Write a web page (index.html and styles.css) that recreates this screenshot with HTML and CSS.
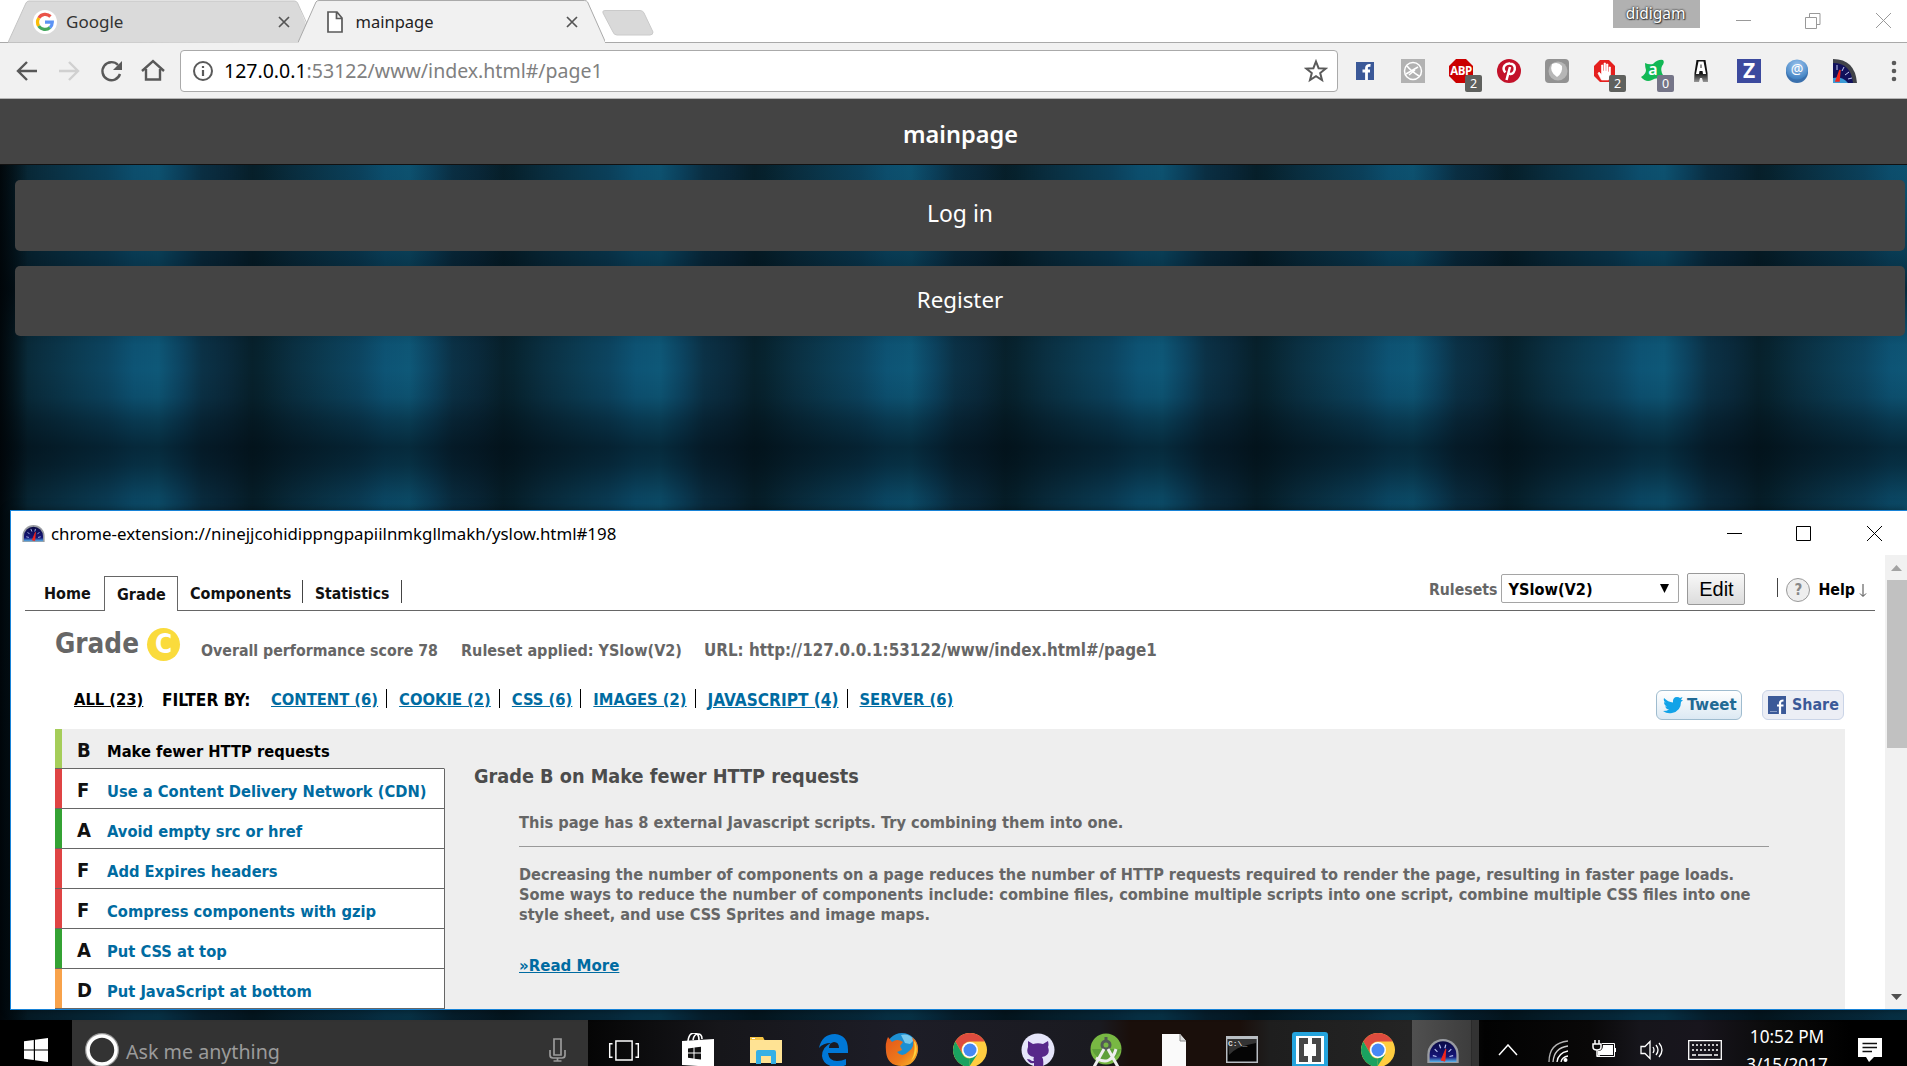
FILE: index.html
```
<!DOCTYPE html>
<html lang="en">
<head>
<meta charset="utf-8">
<title>mainpage</title>
<link rel="stylesheet" href="styles.css">
</head>
<body>
<svg class="defs" aria-hidden="true">
  <defs>
    <linearGradient id="dial" x1="0" y1="0" x2="0" y2="1"><stop offset="0" stop-color="#0a0a45"/><stop offset=".75" stop-color="#151578"/><stop offset="1" stop-color="#5cb8ee"/></linearGradient>
    <linearGradient id="fox" x1="0" y1="0" x2="1" y2="1"><stop offset="0" stop-color="#e4561b"/><stop offset=".6" stop-color="#ee7a1a"/><stop offset="1" stop-color="#fbc02d"/></linearGradient>
    <radialGradient id="orb" cx=".5" cy=".3" r=".7"><stop offset="0" stop-color="#9cc4ee"/><stop offset="1" stop-color="#3d7fc0"/></radialGradient>
    <linearGradient id="lettera" x1="0" y1="0" x2="0" y2="1"><stop offset=".6" stop-color="#111"/><stop offset="1" stop-color="#999"/></linearGradient>
    <symbol id="gauge" viewBox="0 0 34 26">
      <path d="M0 26V17A17 17 0 0 1 34 17V26Z" fill="#9a9da3"/>
      <path d="M2.500 25V17A14.500 14.500 0 0 1 31.500 17V25Z" fill="url(#dial)"/>
      <path d="M6 18l4 1M8 11l3 3M13 6l1.500 4M20 6l-1 4M26 11l-3 3M28 18l-4 1" stroke="#b9c4f2" stroke-width="1.300"/>
      <path d="M15 23L20 11L19 24Z" fill="#f3261c" stroke="#f3261c"/>
    </symbol>
    <symbol id="chrome" viewBox="0 0 34 34">
      <circle cx="17" cy="17" r="17" fill="#ffcd40"/>
      <path d="M2.300 8.500A17 17 0 0 1 31.700 8.500H17A8.500 8.500 0 0 0 9.600 21.200Z" fill="#dd4b3e"/>
      <path d="M2.300 8.500L9.600 21.200A8.500 8.500 0 0 0 17 25.500L16 34A17 17 0 0 1 2.300 8.500Z" fill="#1aa260"/>
      <path d="M17 25.500L24.400 21.200L16 34Z" fill="#1aa260"/>
      <circle cx="17" cy="17" r="8" fill="#fff"/><circle cx="17" cy="17" r="6.500" fill="#4688f4"/>
    </symbol>
  </defs>
</svg>

<header class="tabstrip">
  <div class="tab tab-idle">
    <svg class="tab-shape" viewBox="0 0 302 43"><path d="M0 42.500L18 3Q19 1 21 1H287Q289 1 290 3L302 33V43Z" fill="#dadada"/><path d="M0 42.500L18 3Q19 1 21 1H287Q289 1 290 3L300 25" fill="none" stroke="#c4c4c4"/></svg>
    <svg class="fav" viewBox="0 0 24 24"><circle cx="12" cy="12" r="12" fill="#fff"/><g fill="none" stroke-width="3.200"><path d="M17.500 6.500A7.500 7.500 0 0 0 5.800 8" stroke="#ea5349"/><path d="M5.800 8A7.500 7.500 0 0 0 5.700 16" stroke="#fbbc05"/><path d="M5.700 16A7.500 7.500 0 0 0 17 17.500" stroke="#44a95e"/><path d="M17 17.500A7.500 7.500 0 0 0 19.300 12.200H12" stroke="#5b93f5"/></g></svg>
    <span class="tab-title google">Google</span>
    <svg class="tab-x" viewBox="0 0 12 12"><path d="M1 1L11 11M11 1L1 11"/></svg>
  </div>
  <div class="tab tab-active">
    <svg class="tab-shape" viewBox="0 0 308 43"><path d="M0 42.500L18 2Q19 .5 21 .5H287Q289 .5 290 2L308 42.500V43H0Z" fill="#f1f1f1"/><path d="M0 42.500L18 2Q19 .5 21 .5H287Q289 .5 290 2L308 42.500" fill="none" stroke="#a9a9a9"/></svg>
    <svg class="page-ico" viewBox="0 0 16 22"><path d="M1 1H10L15 7V21H1ZM9.500 1V7.500H15" fill="#fff" stroke="#5a5a5a" stroke-width="1.700"/></svg>
    <span class="tab-title">mainpage</span>
    <svg class="tab-x" viewBox="0 0 12 12"><path d="M1 1L11 11M11 1L1 11"/></svg>
  </div>
  <svg class="newtab" viewBox="0 0 52 26"><path d="M3 .5H38Q41 .5 42 3L51 22Q51 25 48 25H15Q12 25 11 22L1 3Q0 .5 3 .5Z" fill="#d9d9d9" stroke="#cacaca"/></svg>
  <span class="profile">didigam</span>
  <svg class="wc wc-main" viewBox="0 0 171 30"><path d="M0 20.500H15M69.500 17.500h11v11h-11zM73.500 17v-3.500h10.500v11h-3.500M140 13L155 28M155 13L140 28" fill="none" stroke="#999"/></svg>
</header>

<nav class="toolbar">
  <svg class="navs" viewBox="0 0 170 30">
    <g fill="none" stroke="#585858" stroke-width="2.400"><path d="M27 15H9M17 6L8 15L17 24"/><path d="M49 15H67M59 6L68 15L59 24" stroke="#d0d0d0"/><path d="M108 9A9 9 0 1 0 110 18"/><path d="M132 15L143 5L154 15M136 13V23.500H150V13"/></g>
    <path d="M112 5V14H103Z" fill="#585858"/>
  </svg>
  <div class="omnibox">
    <svg class="info" viewBox="0 0 22 22"><circle cx="11" cy="11" r="9" fill="none" stroke="#5a5a5a" stroke-width="2"/><path d="M11 6V8M11 10V16" stroke="#5a5a5a" stroke-width="2.200"/></svg>
    <span class="url"><b>127.0.0.1</b>:53122/www/index.html#/page1</span>
    <svg class="star" viewBox="0 0 24 24"><path d="M12 2.500L14.600 9.200L21.700 9.600L16.200 14.100L18 21L12 17.100L6 21L7.800 14.100L2.300 9.600L9.400 9.200Z" fill="none" stroke="#5a5a5a" stroke-width="2"/></svg>
  </div>
  <div class="ext"><svg viewBox="0 0 24 24"><rect x="3" y="3" width="18" height="18" fill="#3b5998"/><path d="M13.500 21V9Q13.500 6 17.500 6.500M9.500 12H17" fill="none" stroke="#fff" stroke-width="2.800"/></svg></div>
  <div class="ext"><svg viewBox="0 0 24 24"><path d="M0 0H24V24H0Z" fill="#b2b2b2"/><g fill="none" stroke="#fff" stroke-width="1.500"><circle cx="12" cy="12" r="8.500"/><path d="M6 7Q10 12 18 17M5 15L17 8M8 16L14 11"/></g></svg></div>
  <div class="ext"><svg viewBox="0 0 24 24"><path d="M7 0H17L24 7V17L17 24H7L0 17V7Z" fill="#cb0000"/></svg><span class="abp">ABP</span><i class="badge">2</i></div>
  <div class="ext"><svg viewBox="0 0 24 24"><circle cx="12" cy="12" r="12" fill="#c3122a"/><path d="M9.500 21L13 8M8.300 13.500C4 8 9 4 13 4.500C19 5 18.500 11 16.500 13.500C14.500 16 12 15 11.300 13.500" fill="none" stroke="#fff" stroke-width="2.500"/></svg></div>
  <div class="ext"><svg viewBox="0 0 24 24"><rect width="24" height="24" rx="4" fill="#929292"/><circle cx="13" cy="12" r="9.500" fill="#b6b6b6"/><path d="M7 5Q13 2 17 7Q18 14 12 18Q4 13 7 5Z" fill="#fff"/></svg></div>
  <div class="ext"><svg viewBox="0 0 24 24"><path d="M7 1H16L22 7V17L16 23H7L1 17V7Z" fill="#e5201e"/><path d="M8.500 21L5 14.500L6 13L8.500 15.500V6H10V12H11V4H12.500V12H13.500V5H15V13H16V8H17.500V16L15.500 21Z" fill="#fff" stroke="#fff" stroke-width=".6"/></svg><i class="badge">2</i></div>
  <div class="ext"><svg viewBox="0 0 24 24"><path d="M4 4Q8 6 12 5Q17 0 22 1Q24 3 21 7Q19 11 22 16L21 20Q15 18 11 21Q5 24 0 18Q5 15 5 11Q4 8 4 4Z" fill="#12b855"/></svg><span class="avast">a</span><i class="badge bluish">0</i></div>
  <div class="ext"><svg viewBox="0 0 24 24"><path d="M7.500 1H16.500L18.500 14L19 23H14L13 19H11L10 23H5L5.500 14Z" fill="url(#lettera)"/><path d="M9.500 2.500H14.500L17 15H14L13.500 12H10.500L10 15H7Z" fill="#fff"/><path d="M11.500 5.500H12.500V9H11.500Z" fill="#222"/></svg></div>
  <div class="ext"><svg viewBox="0 0 24 24"><path d="M0 0H24V24H0Z" fill="#3c4a9e"/></svg><span class="zed">Z</span></div>
  <div class="ext"><svg viewBox="0 0 24 24"><circle cx="12" cy="13" r="11" fill="#3a70ad"/><ellipse cx="12" cy="10.500" rx="11" ry="10" fill="url(#orb)"/></svg><span class="at">@</span></div>
  <div class="ext"><svg viewBox="0 0 24 24"><path d="M0 0Q22 0 24 24H0Z" fill="#414348"/><path d="M0 4Q18 4 20 24H0Z" fill="#11115c"/><path d="M0 19Q9 17 15 24H0Z" fill="#3b9ad6"/><path d="M4 6v5M11 8l-2 4M16 13l-4 3M19 19l-4 1" stroke="#c4c9ef"/><path d="M3 22L7 11L6 22Z" fill="#f3261c" stroke="#f3261c" stroke-width="1.500"/></svg></div>
  <svg class="dots" viewBox="0 0 6 24"><g fill="#5a5a5a"><circle cx="3" cy="4" r="2.300"/><circle cx="3" cy="12" r="2.300"/><circle cx="3" cy="20" r="2.300"/></g></svg>
</nav>

<main class="app">
  <h1 class="app-head">mainpage</h1>
  <div class="app-body">
    <a class="btn login">Log in</a>
    <a class="btn">Register</a>
  </div>
</main>

<section class="window">
  <div class="titlebar">
    <svg class="title-ico"><use href="#gauge"/></svg>
    <span class="title-text">chrome-extension://ninejjcohidippngpapiilnmkgllmakh/yslow.html#198</span>
    <svg class="wc" viewBox="0 0 180 16"><path d="M0 7.500H15M69.500 .5h14v14h-14zM140 0L155 15M155 0L140 15" fill="none" stroke="#000"/></svg>
  </div>
  <div class="viewport">
    <div class="page">
      <div class="menu">
        <span class="mtab home">Home</span><span class="mtab on">Grade</span><span class="mtab comp">Components</span><span class="mtab stat">Statistics</span>
        <div class="rules">
          <label>Rulesets</label>
          <span class="select">YSlow(V2)<svg viewBox="0 0 9 9"><path d="M0 0H9L4.500 9Z"/></svg></span>
          <span class="edit">Edit</span>
          <span class="bar"></span>
          <span class="q">?</span>
          <span class="help">Help</span>
          <svg class="down" viewBox="0 0 8 14"><path d="M4 0V12M1 9.500L4 12.500L7 9.500" fill="none" stroke="#444"/></svg>
        </div>
      </div>
      <div class="summary">
        <span class="grade">Grade</span><span class="gbadge">C</span>
        <span class="s1">Overall performance score 78</span><span class="s2">Ruleset applied: YSlow(V2)</span><span class="s3">URL: http://127.0.0.1:53122/www/index.html#/page1</span>
      </div>
      <div class="filters">
        <a class="all">ALL (23)</a><span class="by">FILTER BY:</span>
        <span class="f"><a>CONTENT (6)</a></span><span class="f"><a>COOKIE (2)</a></span><span class="f"><a>CSS (6)</a></span><span class="f"><a>IMAGES (2)</a></span><span class="f js"><a>JAVASCRIPT (4)</a></span><span class="f"><a>SERVER (6)</a></span>
        <div class="social">
          <span class="tweet"><svg viewBox="0 0 20 17"><path d="M1 1Q5 5 10 5.500Q9.500 0 14 0Q16 0 17 1L19.500 0L18 3L20 3L18 5Q18 14 9 16Q4 17 0 14Q4 14 6 12.500Q3 12 2 9.500H4Q1 8 1 5L3 6Q0 4 1 1Z" fill="#12a3e8"/></svg>Tweet</span>
          <span class="share"><svg viewBox="0 0 18 18"><path d="M0 0H18V18H0Z" fill="#3b5998"/><path d="M2 15.500H9" stroke="#8c9fc8"/><path d="M12 18V7Q12 4.500 15.500 4.500M9 9.500H15.500" fill="none" stroke="#fff" stroke-width="2.200"/></svg>Share</span>
        </div>
      </div>
      <div class="report">
        <ul class="list">
          <li class="sel gb"><b>B</b>Make fewer HTTP requests</li>
          <li class="gf"><b>F</b>Use a Content Delivery Network (CDN)</li>
          <li class="ga"><b>A</b>Avoid empty src or href</li>
          <li class="gf"><b>F</b>Add Expires headers</li>
          <li class="gf"><b>F</b>Compress components with gzip</li>
          <li class="ga"><b>A</b>Put CSS at top</li>
          <li class="gd"><b>D</b>Put JavaScript at bottom</li>
        </ul>
        <article class="detail">
          <h2>Grade B on Make fewer HTTP requests</h2>
          <p class="count">This page has 8 external Javascript scripts. Try combining them into one.</p>
          <p class="desc">Decreasing the number of components on a page reduces the number of HTTP requests required to render the page, resulting in faster page loads.<br><span class="mid">Some ways to reduce the number of components include: combine files, combine multiple scripts into one script, combine multiple CSS files into one</span><br>style sheet, and use CSS Sprites and image maps.</p>
          <a class="more">»Read More</a>
        </article>
      </div>
    </div>
    <div class="scroll"><svg viewBox="0 0 11 6"><path d="M0 6L5.500 0L11 6Z" fill="#a3a3a3"/></svg><i></i><svg class="dn" viewBox="0 0 11 6"><path d="M0 0L5.500 6L11 0Z" fill="#505050"/></svg></div>
  </div>
</section>

<footer class="taskbar">
  <div class="start"><svg viewBox="0 0 24 24"><path d="M0 3.300L9.800 2V11.500H0ZM11 1.800L24 0V11.500H11ZM0 12.500H9.800V22L0 20.700ZM11 12.500H24V24L11 22.200Z" fill="#fff"/></svg></div>
  <div class="search">
    <svg class="cortana" viewBox="0 0 34 34"><circle cx="17" cy="17" r="15" fill="none" stroke="#999" stroke-width="4"/><circle cx="17" cy="17" r="14" fill="none" stroke="#fff" stroke-width="3.500"/></svg>
    <span>Ask me anything</span>
    <svg class="mic" viewBox="0 0 17 24"><path d="M5 1H12V17H5ZM1 12V17Q1 20 4 20H13Q16 20 16 17V12M8.500 20V23M4.500 23H12.500" fill="none" stroke="#9b9b9b" stroke-width="1.700"/></svg>
  </div>
  <div class="taskview"><svg viewBox="0 0 32 22"><path d="M7.500 1H24.500V21H7.500ZM4 4H1V18H4M28 4H31V18H28" fill="none" stroke="#fff" stroke-width="1.500"/></svg></div>
  <div class="tk"><svg viewBox="0 0 34 34"><path d="M1 8L33 6V34L1 32Z" fill="#fff"/><path d="M7 8Q8 0 13 0Q18 0 18 7M12 7Q13 1 17 1Q21 1 21 6" fill="none" stroke="#fff" stroke-width="1.600"/><path d="M7 15.500L12.500 14.800V19.500H7ZM13.500 14.600L20 13.800V19.500H13.500ZM7 20.500H12.500V25.500L7 24.800ZM13.500 20.500H20V26.500L13.500 25.700Z" fill="#111"/></svg></div>
  <div class="tk"><svg viewBox="0 0 34 34"><path d="M1 4H14L16 8H1Z" fill="#f5c445"/><path d="M1 7H33V30H1Z" fill="#ffe394"/><path d="M3 5.500H6" stroke="#fff"/><path d="M7 31V19Q7 17 9 17H25Q27 17 27 19V31H22V23H12V31Z" fill="#35b0e6"/></svg></div>
  <div class="tk"><svg viewBox="0 0 34 34"><path d="M2 15Q5 1 18 1Q31 2 31 17V20H11Q12 28 20 28Q25 28 29 26V32Q25 34 19 34Q6 33 5 23Q5 14 14 10Q6 10 2 15ZM12 15H22Q22 9 17 9Q12 10 12 15Z" fill="#0078d7" fill-rule="evenodd"/></svg></div>
  <div class="tk"><svg viewBox="0 0 34 34"><circle cx="17" cy="16" r="16" fill="#1c8fd2"/><path d="M16 2Q24 0 29 7L25 11L20 10Z" fill="#78c8ec"/><path d="M3 4L7 9Q12 5 18 9L15 13L17 17L12 19Q17 25 23 19Q31 14 27 4Q34 9 33 18Q30 33 17 33Q2 33 1 18Q0 10 3 4Z" fill="url(#fox)"/><path d="M30 8Q35 20 26 28Q31 19 29 9Z" fill="#ffd23c"/></svg></div>
  <div class="tk"><svg viewBox="0 0 34 34"><use href="#chrome"/></svg></div>
  <div class="tk"><svg viewBox="0 0 34 34"><circle cx="17" cy="17" r="16.500" fill="#e5e5fa"/><path d="M7 8L12 11Q17 9.500 22 11L27 8Q28 12 27 14Q30 22 21 24Q23 26 22 34H13V30Q8 31 6 26Q9 26 11 28H13Q12 26 13 24Q4 22 7 14Z" fill="#57288a"/></svg></div>
  <div class="tk"><svg viewBox="0 0 34 34"><circle cx="17" cy="16" r="15.500" fill="#78b843"/><path d="M3 16H32A15 15 0 0 1 3 16" fill="#5fa03a"/><circle cx="17" cy="12" r="4" fill="none" stroke="#525c55" stroke-width="3"/><path d="M17 4V8" stroke="#525c55" stroke-width="3"/><path d="M15 16L5 34M19 16L29 34M7 25Q22 34 27 16" fill="none" stroke="#eee" stroke-width="3"/></svg></div>
  <div class="tk"><svg viewBox="0 0 34 34"><path d="M5 1H23L29 8V34H5Z" fill="#fafafa"/><path d="M23 1V8H29" fill="#ddd" stroke="#888"/></svg></div>
  <div class="tk"><svg viewBox="0 0 34 34"><path d="M1 3H33V30H1Z" fill="#b9bec3"/><path d="M2.500 6H31.500V28.500H2.500Z" fill="#050505"/><path d="M3 6H31V10Q12 13 4 22Z" fill="#333"/></svg><span class="prompt">C:\_</span></div>
  <div class="tk"><svg viewBox="0 0 36 36"><rect width="36" height="36" rx="3" fill="#25a4dd"/><path d="M4 4H32V32H4Z" fill="#fff"/><path d="M16 6H7V30H16V24H12V12H16ZM20 6H29V30H20V24H24V12H20Z" fill="#474747"/></svg></div>
  <div class="tk"><svg viewBox="0 0 34 34"><use href="#chrome"/></svg></div>
  <div class="tk running"><svg class="g"><use href="#gauge"/></svg></div>
  <div class="tray chev"><svg viewBox="0 0 20 12"><path d="M1 11L10 1L19 11" fill="none" stroke="#fff" stroke-width="1.500"/></svg></div>
  <div class="tray wifi"><svg viewBox="0 0 20 22"><g fill="none" stroke="#fff" stroke-width="1.300"><path d="M1 22Q1 3 20 1" opacity=".7"/><path d="M5 22Q6 8 20 6" opacity=".8"/><path d="M9 22Q10 13 20 11"/><path d="M13 22Q14 17 20 16"/></g><circle cx="17.500" cy="20" r="2" fill="#fff"/></svg></div>
  <div class="tray batt"><svg viewBox="0 0 24 18"><path d="M3 0V4M7 0V4M1 4H9V7Q9 10 5 10Q1 10 1 7ZM5 10V16H8" fill="none" stroke="#fff" stroke-width="1.500"/><path d="M11 5H21V15H6V11Q11 11 11 5Z" fill="#fff"/><path d="M10 3.500H22.500V16.500H5M23.500 8V12" fill="none" stroke="#fff"/></svg></div>
  <div class="tray spk"><svg viewBox="0 0 24 20"><path d="M1 6.500H5L10 1.500V18.500L5 13.500H1ZM13 7Q15 10 13 13M16 5Q20 10 16 15M19 3Q25 10 19 17" fill="none" stroke="#fff" stroke-width="1.300"/></svg></div>
  <div class="tray kbd"><svg viewBox="0 0 34 20"><path d="M.7 .7H33.300V19.300H.7Z" fill="none" stroke="#fff" stroke-width="1.300"/><path d="M4 5H30M4 10H30" stroke="#fff" stroke-width="1.500" stroke-dasharray="2 2"/><path d="M4 15H8M10 15H24M26 15H30" stroke="#fff" stroke-width="1.500"/></svg></div>
  <div class="clock"><span>10:52 PM</span><span class="date">3/15/2017</span></div>
  <div class="tray act"><svg viewBox="0 0 24 24"><path d="M0 0H24V19H16L11 24L8 19H0Z" fill="#fff"/><path d="M4.500 5.500H19M4.500 9.500H19M4.500 13.500H14" stroke="#111" stroke-width="1.300"/></svg></div>
</footer>
</body>
</html>
```
FILE: styles.css
```
* { box-sizing: border-box; }
body { margin: 0; width: 1907px; height: 1066px; overflow: hidden; position: relative; background: #fff; font-family: "Noto Sans", sans-serif; display: flex; flex-direction: column; }
svg { display: block; flex: none; }
.defs { position: absolute; width: 0; height: 0; }
span, a, label, li { white-space: nowrap; }

/* tab strip */
.tabstrip { height: 43px; flex: none; display: flex; align-items: flex-start; padding-left: 8px; border-bottom: 1px solid #a9a9a9; }
.tab { position: relative; width: 302px; height: 43px; display: flex; align-items: center; padding: 0 20px 0 25px; color: #333; font-size: 17px; }
.tab-active { width: 308px; margin-left: -12px; padding: 0 27px 0 29px; color: #222; font-size: 16.500px; }
.tab-shape { position: absolute; inset: 0; width: 100%; height: 43px; }
.tab > :not(.tab-shape) { position: relative; }
.fav { width: 24px; height: 24px; margin-right: 9px; }
.page-ico { width: 16px; height: 22px; margin-right: 13px; }
.tab-title { flex: 1; }
.tab-x { width: 12px; height: 12px; stroke: #555; stroke-width: 1.700; }
.newtab { width: 52px; height: 26px; margin: 10px 0 0 -3px; }
.profile { width: 87px; height: 28px; margin-left: 959px; background: #b1b1b1; color: #fff; font-size: 15.500px; line-height: 26px; text-align: center; padding-right: 2px; text-shadow: 0 0 2px #333, 0 0 2px #333, 1px 1px 1px #444; }
.wc-main { width: 171px; height: 30px; margin-left: 36px; }

/* toolbar */
.toolbar { height: 56px; flex: none; background: #f1f1f1; display: flex; align-items: center; border-bottom: 1px solid #b4b4b4; padding-left: 10px; }
.navs { width: 170px; height: 30px; }
.omnibox { width: 1158px; height: 42px; margin-right: 3px; border: 1px solid #aaa; border-radius: 4px; background: #fff; display: flex; align-items: center; padding: 0 9px 0 11px; }
.info { width: 22px; height: 22px; margin-right: 10px; }
.url { flex: 1; color: #808080; font-size: 19.500px; }
.url b { font-weight: 400; color: #000; }
.star { width: 24px; height: 24px; }
.ext { width: 48px; height: 24px; position: relative; display: flex; justify-content: center; }
.ext svg { width: 24px; height: 24px; }
.badge { position: absolute; left: 28px; top: 16px; width: 17px; height: 17px; background: #5f615e; border-radius: 2px; color: #fff; font: normal 12.500px/17px "Noto Sans", sans-serif; text-align: center; }
.bluish { background: #757588; }
.abp, .avast, .zed, .at { position: absolute; left: 0; width: 48px; text-align: center; color: #fff; font-weight: 700; line-height: 24px; }
.abp { font: 700 11.500px/24px "Open Sans", sans-serif; letter-spacing: -.5px; }
.avast { font-size: 16px; line-height: 21px; font-weight: 600; }
.zed { font-size: 21px; line-height: 23px; }
.at { font-size: 14px; line-height: 20px; font-weight: 400; }
.dots { width: 6px; height: 24px; margin-left: 22px; }

/* app page */
.app { height: 921px; flex: none; background: #04151e; }
.app-head { height: 66px; margin: 0; background: #444; border-bottom: 1px solid #111; color: #fff; font-size: 23.500px; font-weight: 600; line-height: 71px; text-align: center; padding-left: 14px; }
.app-body { height: 855px; padding: 15px 2px 0 15px; display: flex; flex-direction: column; gap: 15px;
  background:
    linear-gradient(90deg, rgba(0,3,6,.85), rgba(0,3,6,0) 28px),
    linear-gradient(180deg, rgba(0,9,16,.08) 0, rgba(0,9,16,.12) 30px, rgba(0,9,16,.34) 88px, rgba(0,9,16,.42) 102px, rgba(0,9,16,.6) 124px, rgba(0,9,16,.2) 160px, rgba(0,9,16,.03) 180px, rgba(0,9,16,0) 205px, rgba(0,9,16,.09) 232px, rgba(0,9,16,.36) 255px, rgba(0,9,16,.58) 282px, rgba(0,9,16,.5) 300px, rgba(0,9,16,.24) 328px, rgba(0,9,16,.12) 345px, rgba(0,9,16,.45) 844px, rgba(0,9,16,.5) 855px),
    linear-gradient(90deg, #072430 0, #0a3042 30px, #0b3c53 65px, #0c4561 95px, #0d5475 122px, #0e5878 146px, #0c4562 168px, #0b3247 190px, #0a2a3c 215px, #07212c 240px, #072430 251px) 12px 0 / 251px 100%; }
.btn { height: 71px; background: #444; border-radius: 5px; color: #fff; text-align: center; font-size: 22.900px; line-height: 67px; }
.btn + .btn { height: 70px; font-size: 22.300px; }

/* yslow window */
.window { position: absolute; left: 10px; top: 510px; width: 1897px; height: 500px; background: #fff; border: 1px solid #1883d7; border-right: 0; display: flex; flex-direction: column; box-shadow: 0 0 8px rgba(0,0,0,.5); font-family: "DejaVu Sans Condensed", "DejaVu Sans", sans-serif; font-weight: 700; }
.titlebar { height: 44px; flex: none; display: flex; align-items: center; padding: 1px 0 0 11px; font-family: "Noto Sans", sans-serif; font-weight: 400; font-size: 16.850px; }
.title-ico { width: 23px; height: 17px; margin-right: 6px; }
.title-text { flex: 1; }
.titlebar .wc { width: 180px; height: 16px; }
.viewport { flex: 1; display: flex; min-height: 0; }
.page { flex: 1; padding: 18px 10px 0 14px; overflow: hidden; }
.menu { height: 38px; border-bottom: 1px solid #666; display: flex; align-items: flex-end; font-size: 16px; color: #111; }
.mtab { height: 23px; line-height: 28px; margin-bottom: 7px; }
.home { width: 79px; padding-left: 19px; }
.on { height: 35px; width: 74px; padding-left: 12px; line-height: 35px; border: 1px solid #666; border-bottom: 0; background: #fff; margin-bottom: -1px; }
.comp { width: 125px; padding-left: 12px; border-right: 1px solid #444; }
.stat { width: 99px; padding-left: 12px; border-right: 1px solid #444; font-size: 15.600px; }
.rules { margin-left: auto; align-self: stretch; display: flex; align-items: center; padding-bottom: 6px; padding-right: 8px; }
.rules label { color: #666; font-size: 15.700px; margin-right: 4px; padding-top: 2px; }
.select { width: 178px; height: 29px; border: 1px solid #a5a5a5; border-radius: 2px; padding: 2px 9px 0 6px; display: flex; align-items: center; justify-content: space-between; color: #000; font-size: 16.200px; }
.select svg { width: 9px; height: 9px; margin-top: -3px; }
.edit { width: 58px; height: 32px; margin-left: 8px; border: 1px solid #999; border-radius: 2px; background: linear-gradient(#f8f8f8, #dcdcdc); font: 400 20px/30px "Liberation Sans", sans-serif; text-align: center; color: #000; }
.bar { width: 1px; height: 19px; background: #444; margin-left: 32px; margin-bottom: 3px; }
.q { width: 24px; height: 24px; border: 1px solid #999; border-radius: 50%; background: #eee; color: #888; text-align: center; line-height: 22px; margin: 3px 8px 0 8px; font-size: 15px; }
.help { font-size: 15.800px; color: #000; padding-top: 2px; }
.down { width: 8px; height: 14px; margin: 5px 0 0 4px; }
.summary { height: 65px; display: flex; align-items: baseline; padding-left: 30px; color: #666; font-size: 16px; }
.grade { font-size: 27.600px; line-height: 66px; width: 92px; }
.gbadge { width: 33px; height: 33px; border-radius: 50%; background: #fadb3c; color: #fff; text-align: center; font-size: 26px; line-height: 32px; margin-right: 21px; }
.s1, .s2, .s3 { position: relative; top: 3px; }
.s1 { width: 260px; font-size: 15.760px; } .s2 { width: 243px; font-size: 16.040px; } .s3 { font-size: 16.840px; }
.filters { height: 53px; display: flex; align-items: flex-start; padding: 13px 31px 0 49px; font-size: 16.400px; line-height: 22px; color: #000; }
.all { text-decoration: underline; width: 88px; }
.by { width: 109px; font-size: 17.200px; }
.f { color: #06a; padding-right: 8px; height: 19px; border-right: 1px solid #000; margin-right: 12px; }
.f a { color: #006ba1; text-decoration: underline; }
.f.js { font-size: 17.100px; }
.f:nth-child(8) { border: 0; }
.social { margin-left: auto; display: flex; gap: 20px; }
.tweet, .share { height: 30px; border-radius: 6px; display: flex; align-items: center; margin-top: 1px; }
.tweet { width: 86px; border: 1px solid #9fbccf; background: linear-gradient(#fff, #dce9f3); color: #216a94; padding-left: 6px; gap: 4px; font-size: 16.600px; }
.tweet svg { width: 20px; height: 17px; }
.share { width: 82px; border: 1px solid #cad4e7; background: #eceef5; color: #3b5998; padding-left: 5px; gap: 6px; font-size: 15.900px; }
.share svg { width: 18px; height: 18px; }
.report { margin: 0 30px; height: 290px; background: #eee; display: flex; }
.list { list-style: none; margin: 0; padding: 0; width: 390px; flex: none; }
.list li { height: 40px; border-bottom: 1px solid #666; border-right: 1px solid #666; display: flex; align-items: center; background: #fff; color: #006ba1; font-size: 16.350px; padding-top: 6px; position: relative; }
.list li::before { content: ""; position: absolute; left: 0; top: 0; width: 7px; height: 39px; background: var(--g); }
.list b { width: 52px; padding-left: 22px; color: #111; font-size: 20px; padding-bottom: 4px; }
.list .sel { background: #eee; border-right-color: #eee; color: #000; }
.gb { --g: #a5cd59; } .gf { --g: #df4444; } .ga { --g: #34a234; } .gd { --g: #f8a24a; }
.detail { padding-left: 29px; color: #666; flex: 1; font-size: 16.160px; line-height: 20px; }
.detail h2 { margin: 35px 0 0; font-size: 19.690px; line-height: 26px; color: #4c4c4c; white-space: nowrap; }
.detail p { margin: 0 0 0 45px; white-space: nowrap; }
.detail .count { margin-right: 76px; margin-top: 23px; padding-bottom: 13px; border-bottom: 1px solid #999; font-size: 16.300px; }
.detail .desc { margin-top: 18px; }
.mid { font-size: 16.250px; }
.more { display: block; margin: 30px 0 0 45px; color: #006ba1; text-decoration: underline; font-size: 16.700px; }
.scroll { width: 22px; background: #f1f1f1; display: flex; flex-direction: column; align-items: center; padding-top: 10px; }
.scroll svg { width: 11px; height: 6px; }
.scroll i { width: 20px; margin: 9px 0 0 2px; height: 168px; background: #c1c1c1; }
.scroll .dn { margin-top: auto; margin-bottom: 9px; }

/* taskbar */
.taskbar { height: 46px; flex: none; background: linear-gradient(90deg, #050505 588px, #16161a 720px, #1d1d27 900px, #1a1a20 1100px, #1a0f0b 1130px, #1a0f0b 1240px, #1e1e1e 1270px, #242424 1410px, #020202 1485px, #090808 1590px, #16151b 1640px, #18151d 1700px, #0b0b0b 1770px, #000 1850px); display: flex; align-items: flex-start; overflow: hidden; color: #fff; }
.start { width: 72px; height: 46px; background: #000; padding: 18px 0 0 24px; }
.start svg { width: 24px; height: 24px; }
.search { width: 516px; height: 46px; background: #333; display: flex; align-items: flex-start; color: #9b9b9b; font-size: 19.670px; padding: 0 22px 0 13px; }
.search span { flex: 1; line-height: 27px; margin: 18px 0 0 7px; }
.cortana { width: 34px; height: 34px; margin-top: 13px; }
.mic { width: 17px; height: 24px; margin-top: 18px; }
.taskview { width: 76px; padding: 20px 0 0 20px; }
.taskview svg { width: 32px; height: 21px; }
.tk { width: 68px; height: 46px; flex: none; padding-top: 13px; display: flex; justify-content: center; position: relative; }
.tk svg { width: 34px; height: 34px; }
.tk:nth-child(13) svg { width: 36px; height: 36px; margin-top: -1px; }
.prompt { position: absolute; left: 20px; top: 19px; font: 700 8px/10px "Liberation Mono", monospace; color: #ddd; }
.tk.running { width: 67px; background: linear-gradient(90deg, #505050, #3d3d3d 59px, #222 59px, #333 60px); padding: 19px 5px 0 0; }
.tk.running svg { width: 34px; height: 24px; }
.tray { flex: none; display: flex; justify-content: center; height: 46px; }
.chev { width: 58px; padding-top: 24px; } .chev svg { width: 20px; height: 12px; }
.wifi { width: 44px; padding: 20px 2px 0 0; } .wifi svg { width: 20px; height: 22px; }
.batt { width: 48px; padding: 20px 2px 0 0; } .batt svg { width: 24px; height: 18px; }
.spk { width: 46px; padding-top: 20px; } .spk svg { width: 24px; height: 20px; }
.kbd { width: 60px; padding-top: 20px; } .kbd svg { width: 34px; height: 20px; }
.clock { width: 104px; font-size: 17.200px; line-height: 28px; padding-top: 3px; text-align: center; display: flex; flex-direction: column; }
.act { width: 62px; padding: 18px 0 0 0; } .act svg { width: 24px; height: 24px; }
```
